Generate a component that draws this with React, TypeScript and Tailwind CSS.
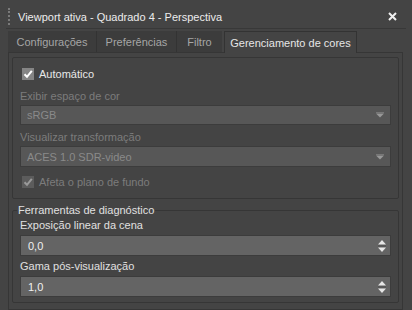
import React from 'react';

const Arrow = () => (
    <svg width="8" height="6" viewBox="0 0 8 6" className="shrink-0">
        <rect x="0" y="0" width="8" height="1" fill="#777" />
        <path d="M0 1.5 H8 L4 5.5 Z" fill="#999" />
    </svg>
);

const Spinner = () => (
    <svg width="8" height="12" viewBox="0 0 8 12" className="shrink-0">
        <path d="M4 0 L8 4.5 H0 Z" fill="#e6e6e6" />
        <rect x="0" y="5.5" width="8" height="1" fill="#4a4a4a" />
        <path d="M0 7.5 H8 L4 12 Z" fill="#e6e6e6" />
    </svg>
);

const Check = ({ disabled }: { disabled?: boolean }) => (
    <span
        className={
            'flex h-[12px] w-[12px] shrink-0 items-center justify-center ' +
            (disabled ? 'bg-[#5c5c5c]' : 'bg-[#858585]')
        }
    >
        <svg width="10" height="10" viewBox="0 0 10 10">
            <path
                d="M1.5 5.2 L4 7.8 L8.8 1.8"
                fill="none"
                stroke={disabled ? '#9a9a9a' : '#ffffff'}
                strokeWidth="2"
            />
        </svg>
    </span>
);

export default function App() {
    const tabs = [
        { label: 'Configurações', w: 'w-[89px]' },
        { label: 'Preferências', w: 'w-[80px]' },
        { label: 'Filtro', w: 'w-[45px]' },
    ];

    return (
        <div
            className="flex h-[310px] w-[412px] flex-col overflow-hidden bg-[#444444] text-[11px] leading-[16px] text-[#dcdcdc]"
            style={{ fontFamily: '"Liberation Sans", Arial, sans-serif' }}
        >
            {/* Title bar */}
            <div className="mx-[6px] flex h-[29px] shrink-0 items-center border-b border-[#383838] pr-[6px] pt-[5px]">
                <div className="ml-[2px] h-[17px] border-l-2 border-dotted border-[#7a7a7a]" />
                <span className="ml-[8px] flex-1 text-[#ececec]">Viewport ativa - Quadrado 4 - Perspectiva</span>
                <svg width="9" height="9" viewBox="0 0 9 9" className="mr-[3px]">
                    <path d="M1 1 L8 8 M8 1 L1 8" stroke="#f0f0f0" strokeWidth="2" />
                </svg>
            </div>

            <div className="flex h-[281px] flex-col pl-[8px] pr-[9px] pt-[2px]">
                {/* Tabs */}
                <div className="flex h-[21px] shrink-0 items-end">
                    {tabs.map((t, i) => (
                        <div
                            key={t.label}
                            className={
                                'flex h-[21px] items-center justify-center bg-[#3c3c3c] text-[#a6a6a6] ' +
                                t.w +
                                (i < 2 ? ' border-r border-[#333333]' : '')
                            }
                        >
                            {t.label}
                        </div>
                    ))}
                    <div className="relative z-10 ml-[2px] -mb-px flex h-[22px] w-[133px] items-center justify-center border border-b-0 border-[#333333] bg-[#444444] text-[#e6e6e6]">
                        Gerenciamento de cores
                    </div>
                </div>

                {/* Content panel */}
                <div className="flex h-[258px] flex-col border border-[#363636] px-[3px]">
                    {/* Group 1 */}
                    <div className="mt-[4px] flex flex-col rounded-[2px] border border-[#363636] px-[7px] pb-[9px] pt-[9px]">
                        <div className="flex h-[14px] items-center gap-[5px] pl-[2px]">
                            <Check />
                            <span className="text-[#e8e8e8]">Automático</span>
                        </div>
                        <div className="mt-[7px] h-[16px] text-[#7c7c7c]">Exibir espaço de cor</div>
                        <div className="mt-[1px] flex h-[20px] items-center justify-between border border-[#3c3c3c] bg-[#575757] px-[6px] text-[#8a8a8a]">
                            <span>sRGB</span>
                            <Arrow />
                        </div>
                        <div className="mt-[4px] h-[16px] text-[#7c7c7c]">Visualizar transformação</div>
                        <div className="mt-[1px] flex h-[21px] items-center justify-between border border-[#3c3c3c] bg-[#575757] px-[6px] text-[#8a8a8a]">
                            <span>ACES 1.0 SDR-video</span>
                            <Arrow />
                        </div>
                        <div className="mt-[8px] flex h-[14px] items-center gap-[5px] pl-[2px]">
                            <Check disabled />
                            <span className="text-[#7c7c7c]">Afeta o plano de fundo</span>
                        </div>
                    </div>

                    {/* Group 2 */}
                    <div className="relative mt-[11px] flex flex-col rounded-[2px] border border-[#363636] px-[7px] pb-[5px] pt-[6px]">
                        <span className="absolute -top-[9px] left-[4px] bg-[#444444] px-px text-[#e0e0e0]">
                            Ferramentas de diagnóstico
                        </span>
                        <div className="h-[16px] text-[#e0e0e0]">Exposição linear da cena</div>
                        <div className="mt-[2px] flex h-[21px] items-center justify-between border border-[#3c3c3c] bg-[#646464] pl-[7px] pr-[4px] text-[#f0f0f0]">
                            <span>0,0</span>
                            <Spinner />
                        </div>
                        <div className="mt-[2px] h-[16px] text-[#e0e0e0]">Gama pós-visualização</div>
                        <div className="mt-[2px] flex h-[21px] items-center justify-between border border-[#3c3c3c] bg-[#646464] pl-[7px] pr-[4px] text-[#f0f0f0]">
                            <span>1,0</span>
                            <Spinner />
                        </div>
                    </div>
                </div>
            </div>
        </div>
    );
}
